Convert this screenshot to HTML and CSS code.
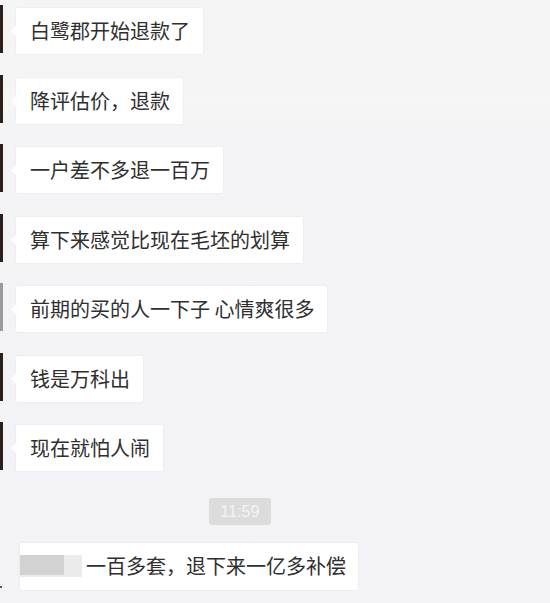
FILE: index.html
```html
<!DOCTYPE html>
<html lang="zh">
<head>
<meta charset="utf-8">
<link rel="stylesheet" href="styles.css">
</head>
<body>
<div class="chat">
  <div class="row"><span class="avatar"></span><div class="bubble">白鹭郡开始退款了</div></div>
  <div class="row"><span class="avatar"></span><div class="bubble">降评估价，退款</div></div>
  <div class="row"><span class="avatar"></span><div class="bubble">一户差不多退一百万</div></div>
  <div class="row"><span class="avatar"></span><div class="bubble">算下来感觉比现在毛坯的划算</div></div>
  <div class="row"><span class="avatar light"></span><div class="bubble">前期的买的人一下子 心情爽很多</div></div>
  <div class="row"><span class="avatar"></span><div class="bubble">钱是万科出</div></div>
  <div class="row"><span class="avatar"></span><div class="bubble">现在就怕人闹</div></div>
  <div class="time-row"><span class="time">11:59</span></div>
  <div class="row last"><span class="dot"></span><div class="bubble quote"><span class="redact"><span class="redact-dark"></span></span><span>一百多套，退下来一亿多补偿</span></div></div>
</div>
</body>
</html>
```
FILE: styles.css
```css
html, body {
  margin: 0;
  padding: 0;
}
body {
  width: 550px;
  height: 603px;
  overflow: hidden;
  background: linear-gradient(to bottom, #f5f5f5 0px, #f5f5f5 90px, #f5f6f5 100px, #f4f3f6 130px, #f3f2f6 603px);
  font-family: "Noto Sans CJK SC", "Noto Sans", sans-serif;
}
.chat {
  display: flex;
  flex-direction: column;
  padding-top: 8px;
}
.row {
  display: flex;
  align-items: stretch;
  gap: 13px;
  margin-bottom: 23.5px;
}
.avatar {
  width: 3px;
  background: #2b211c;
  margin-top: -3px;
  margin-bottom: 1px;
}
.avatar.light {
  background: #9a9a9a;
}
.bubble {
  position: relative;
  background: #ffffff;
  color: #2f2f2f;
  font-size: 20px;
  line-height: 26px;
  padding: 10px 13px 10px 14px;
  border-radius: 2px;
  box-shadow: 0 0 0 1px rgba(0, 0, 0, 0.025);
  white-space: pre;
}
.bubble::before {
  content: "";
  position: absolute;
  left: -5px;
  top: 18px;
  border-top: 5px solid transparent;
  border-bottom: 5px solid transparent;
  border-right: 5px solid #ffffff;
}
.time-row {
  display: flex;
  justify-content: flex-start;
  padding-left: 209px;
  margin-top: 3.5px;
  margin-bottom: 18px;
}
.time {
  width: 62px;
  height: 27px;
  line-height: 27px;
  text-align: center;
  background: #dcdcdc;
  color: #f4f4f4;
  font-family: "Liberation Sans", Arial, sans-serif;
  font-size: 16px;
  border-radius: 3px;
}
.row.last {
  gap: 18px;
  position: relative;
}
.dot {
  width: 2px;
  align-self: flex-end;
  height: 2px;
  margin-bottom: 2px;
  background: #555;
}
.bubble.quote {
  display: flex;
  align-items: center;
  padding: 10px 12px 11px 0;
}
.bubble.quote::before {
  display: none;
}
.redact {
  display: flex;
  width: 62px;
  height: 22px;
  background: #ececec;
  margin-right: 4px;
}
.redact-dark {
  width: 44px;
  height: 20px;
  background: #d2d2d2;
}
```
